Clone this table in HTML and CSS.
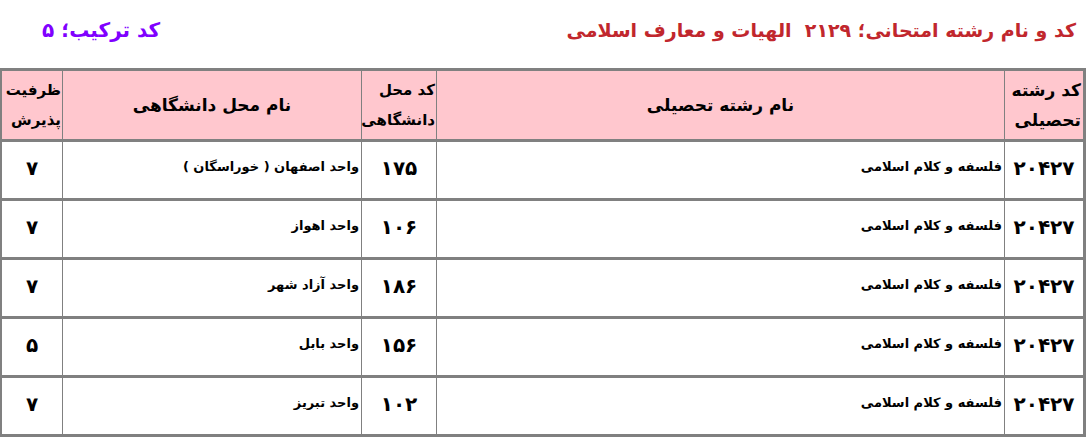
FILE: index.html
```html
<!DOCTYPE html>
<html lang="fa" dir="rtl">
<head>
<meta charset="utf-8">
<link rel="stylesheet" href="styles.css">
</head>
<body>
<div class="top">
  <div class="title">کد و نام رشته امتحانی؛ ۲۱۲۹&nbsp; الهیات و معارف اسلامی</div>
  <div class="combo">کد ترکیب؛ ۵</div>
</div>
<table class="grid">
  <colgroup>
    <col class="c1"><col class="c2"><col class="c3"><col class="c4"><col class="c5">
  </colgroup>
  <thead>
    <tr>
      <th class="hr">کد رشته<br>تحصیلی</th>
      <th class="hc">نام رشته تحصیلی</th>
      <th class="hr small">کد محل<br>دانشگاهی</th>
      <th class="hc">نام محل دانشگاهی</th>
      <th class="hr small">ظرفیت<br>پذیرش</th>
    </tr>
  </thead>
  <tbody>
    <tr><td class="num">۲۰۴۲۷</td><td class="txt">فلسفه و کلام اسلامی</td><td class="num">۱۷۵</td><td class="txt">واحد اصفهان ( خوراسگان )</td><td class="num">۷</td></tr>
    <tr><td class="num">۲۰۴۲۷</td><td class="txt">فلسفه و کلام اسلامی</td><td class="num">۱۰۶</td><td class="txt">واحد اهواز</td><td class="num">۷</td></tr>
    <tr><td class="num">۲۰۴۲۷</td><td class="txt">فلسفه و کلام اسلامی</td><td class="num">۱۸۶</td><td class="txt">واحد آزاد شهر</td><td class="num">۷</td></tr>
    <tr><td class="num">۲۰۴۲۷</td><td class="txt">فلسفه و کلام اسلامی</td><td class="num">۱۵۶</td><td class="txt">واحد بابل</td><td class="num">۵</td></tr>
    <tr><td class="num">۲۰۴۲۷</td><td class="txt">فلسفه و کلام اسلامی</td><td class="num">۱۰۲</td><td class="txt">واحد تبریز</td><td class="num">۷</td></tr>
  </tbody>
</table>
</body>
</html>
```

FILE: styles.css
```css
html, body {
  margin: 0;
  padding: 0;
  background: #ffffff;
}
body {
  font-family: "DejaVu Sans", "Noto Sans", sans-serif;
  color: #000;
}
.top {
  display: flex;
  justify-content: space-between;
  align-items: center;
  height: 68px;
  padding: 0 12px 0 925px;
  box-sizing: border-box;
  width: 1088px;
}
.title {
  color: #c1272d;
  font-weight: bold;
  font-size: 19px;
  padding-bottom: 8px;
  white-space: nowrap;
}
.combo {
  color: #8000ff;
  font-weight: bold;
  font-size: 20px;
  padding-bottom: 8px;
  margin-left: -883px;
  white-space: nowrap;
}
.grid {
  border-collapse: collapse;
  width: 1084px;
  margin-right: 2px;
  table-layout: fixed;
  border: 3px solid #808080;
}
.c1 { width: 80px; }
.c2 { width: 568px; }
.c3 { width: 75px; }
.c4 { width: 299px; }
.c5 { width: 62px; }
th {
  background: #ffc7ce;
  font-weight: bold;
  height: 68px;
  border-left: 1px solid #808080;
  border-bottom: 3px solid #808080;
  padding: 0 2px;
  font-size: 17px;
  line-height: 30px;
  color: #000;
}
th.hr { text-align: right; vertical-align: middle; }
th.small { font-size: 15px; padding: 0 1px; }
th.hc { text-align: center; vertical-align: middle; font-size: 17px; }
td {
  height: 41px;
  border-left: 1px solid #808080;
  border-bottom: 3px solid #808080;
  vertical-align: top;
  padding: 0;
}
td.num {
  text-align: center;
  font-weight: bold;
  font-size: 20px;
  line-height: 24px;
  padding-top: 14px;
}
td.txt {
  text-align: right;
  font-weight: bold;
  font-size: 13px;
  line-height: 20px;
  padding-top: 15px;
  padding-right: 2px;
}
```
